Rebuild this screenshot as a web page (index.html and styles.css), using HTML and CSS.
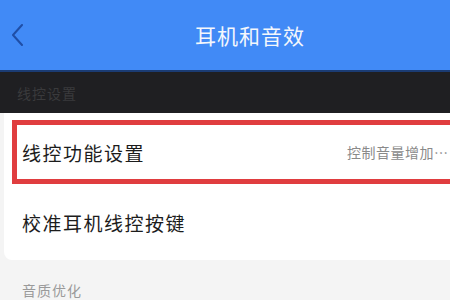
FILE: index.html
```html
<!DOCTYPE html>
<html lang="zh-CN">

<head>
    <meta charset="UTF-8">
    <meta name="viewport" content="width=device-width, initial-scale=1.0">
    <title>耳机和音效</title>
    <link rel="stylesheet" href="styles.css">
</head>

<body>
    <div class="header">
        <div class="back">
            <svg width="12" height="22" viewBox="0 0 12 22">
                <path d="M10 1 L1 11 L10 21" fill="none" stroke="#1f4ea6" stroke-width="2" stroke-linecap="round" stroke-linejoin="round" />
            </svg>
        </div>
        <div class="title">耳机和音效</div>
    </div>

    <div class="group-title dark">线控设置</div>

    <div class="card">
        <div class="row highlight">
            <span class="label">线控功能设置</span>
            <span class="sub">控制音量增加…</span>
        </div>
        <div class="row">
            <span class="label">校准耳机线控按键</span>
        </div>
    </div>

    <div class="group-title">音质优化</div>
</body>

</html>
```

FILE: styles.css
```css
body {
    margin: 0;
    padding: 0;
    width: 450px;
    height: 300px;
    overflow: hidden;
    background-color: #f4f4f4;
    font-family: "Noto Sans CJK SC", "Noto Sans", sans-serif;
}

.header {
    display: flex;
    align-items: center;
    height: 70px;
    background-color: #418af6;
    border-bottom: 2px solid #1b3c74;
}

.back {
    width: 50px;
    padding-left: 12px;
    box-sizing: border-box;
    display: flex;
    align-items: center;
}

.title {
    flex: 1;
    text-align: center;
    color: #f4f7fc;
    font-size: 21px;
    letter-spacing: 1px;
    padding-bottom: 1px;
}

.group-title {
    padding: 20px 0 0 22px;
    font-size: 14px;
    color: #9a9a9a;
    letter-spacing: 1px;
}

.group-title.dark {
    height: 41px;
    box-sizing: border-box;
    padding: 11px 0 0 17px;
    background-color: #1f1f22;
    color: #3a3a3c;
}

.card {
    margin-left: 4px;
    padding-top: 7px;
    background-color: #fff;
    border-radius: 0 0 0 8px;
}

.row {
    display: flex;
    align-items: center;
    height: 76px;
    padding-left: 18px;
    box-sizing: border-box;
}

.row.highlight {
    width: 470px;
    height: 64px;
    margin-left: 8px;
    padding-left: 5px;
    border: 5px solid #e03d3f;
}

.label {
    font-size: 19px;
    letter-spacing: 1.5px;
    color: #1c1c1c;
}

.highlight .label {
    width: 325px;
    flex-shrink: 0;
}

.sub {
    font-size: 14px;
    letter-spacing: 0.5px;
    color: #8a8a8a;
    white-space: nowrap;
}
```
